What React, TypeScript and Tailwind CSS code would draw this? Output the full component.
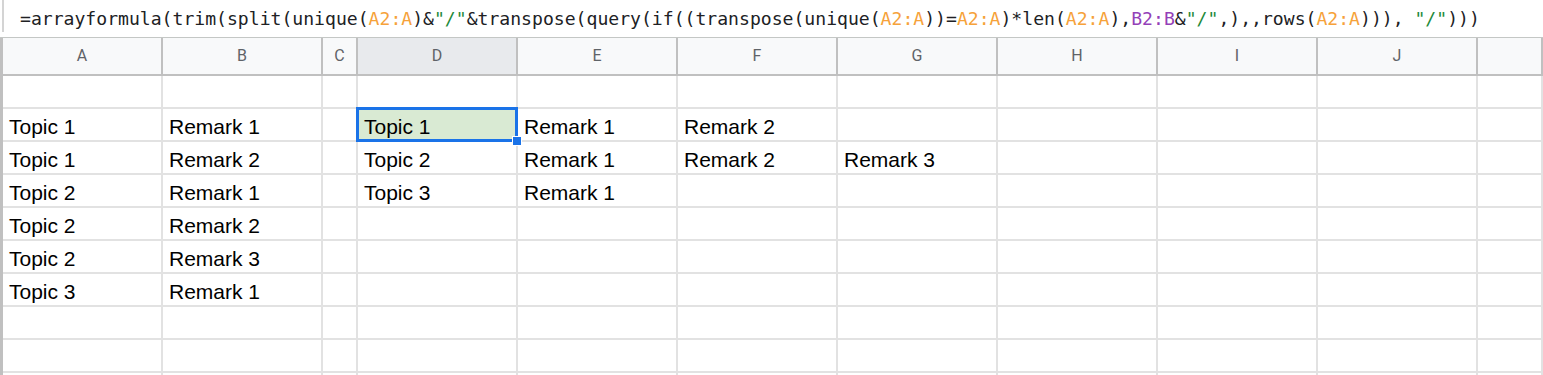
const cols = [
  { key: "A", w: "w-[160px]" },
  { key: "B", w: "w-[160px]" },
  { key: "C", w: "w-[35px]" },
  { key: "D", w: "w-[160px]" },
  { key: "E", w: "w-[160px]" },
  { key: "F", w: "w-[160px]" },
  { key: "G", w: "w-[160px]" },
  { key: "H", w: "w-[160px]" },
  { key: "I", w: "w-[160px]" },
  { key: "J", w: "w-[160px]" },
  { key: "", w: "flex-1" },
];

const rows: string[][] = [
  [],
  ["Topic 1", "Remark 1", "", "Topic 1", "Remark 1", "Remark 2"],
  ["Topic 1", "Remark 2", "", "Topic 2", "Remark 1", "Remark 2", "Remark 3"],
  ["Topic 2", "Remark 1", "", "Topic 3", "Remark 1"],
  ["Topic 2", "Remark 2"],
  ["Topic 2", "Remark 3"],
  ["Topic 3", "Remark 1"],
  [],
  [],
  [],
];

const Orange = ({ children }: { children: string }) => <span className="text-[#f6a23a]">{children}</span>;
const Purple = ({ children }: { children: string }) => <span className="text-[#9440b8]">{children}</span>;
const Green = ({ children }: { children: string }) => <span className="text-[#1e8a3a]">{children}</span>;

const FormulaBar = () => (
  <div className="flex h-[38px] items-center border-b border-[#c4c7c5] bg-white">
    <div className="h-[32px] w-[4px] self-start border-r-[2px] border-[#d4d4d4]" />
    <div className="whitespace-pre pl-[16px] pt-[1px] font-['DejaVu_Sans_Mono',monospace] text-[18.1px] leading-[22px] text-[#202124]">
      =arrayformula(trim(split(unique(<Orange>A2:A</Orange>)&<Green>"/"</Green>&transpose(query(if((transpose(unique(<Orange>A2:A</Orange>))=<Orange>A2:A</Orange>)*len(<Orange>A2:A</Orange>),<Purple>B2:B</Purple>&<Green>"/"</Green>,),,rows(<Orange>A2:A</Orange>))), <Green>"/"</Green>)))
    </div>
  </div>
);

const Header = () => (
  <div className="flex h-[38px] border-b-[2px] border-[#c0c0c0] bg-[#f8f9fa]">
    <div className="w-[3px] shrink-0 bg-[#c0c0c0]" />
    {cols.map((c) => (
      <div
        key={c.key || "k"}
        className={`${c.w} flex shrink-0 items-center justify-center border-r-[2px] border-[#c0c0c0] font-['Roboto',sans-serif] text-[16px] text-[#5f6368] ${c.key === "D" ? "bg-[#e8eaed]" : ""}`}
      >
        {c.key}
      </div>
    ))}
  </div>
);

export default function App() {
  return (
    <div className="h-[375px] w-[1543px] overflow-hidden bg-white">
      <FormulaBar />
      <Header />
      {rows.map((r, ri) => (
        <div key={ri} className="flex h-[33px]">
          <div className="w-[3px] shrink-0 bg-[#c0c0c0]" />
          {cols.map((c, ci) => {
            const selected = ri === 1 && ci === 3;
            return (
              <div
                key={ci}
                className={`${c.w} relative flex shrink-0 items-end overflow-visible whitespace-nowrap border-r-[2px] border-b-[2px] border-[#e2e2e2] px-[6px] pb-[1px] font-['Liberation_Sans',Arial,sans-serif] text-[21px] leading-[24px] text-black`}
              >
                {selected && (
                  <>
                    <div className="absolute -top-[2px] -left-[2px] -right-[2px] -bottom-[2px] border-[3px] border-[#1a73e8] bg-[#d9ead3]" />
                    <div className="absolute -right-[6px] -bottom-[6px] z-10 h-[10px] w-[10px] border border-white bg-[#1a73e8]" />
                  </>
                )}
                <span className="relative">{r[ci] ?? ""}</span>
              </div>
            );
          })}
        </div>
      ))}
    </div>
  );
}
